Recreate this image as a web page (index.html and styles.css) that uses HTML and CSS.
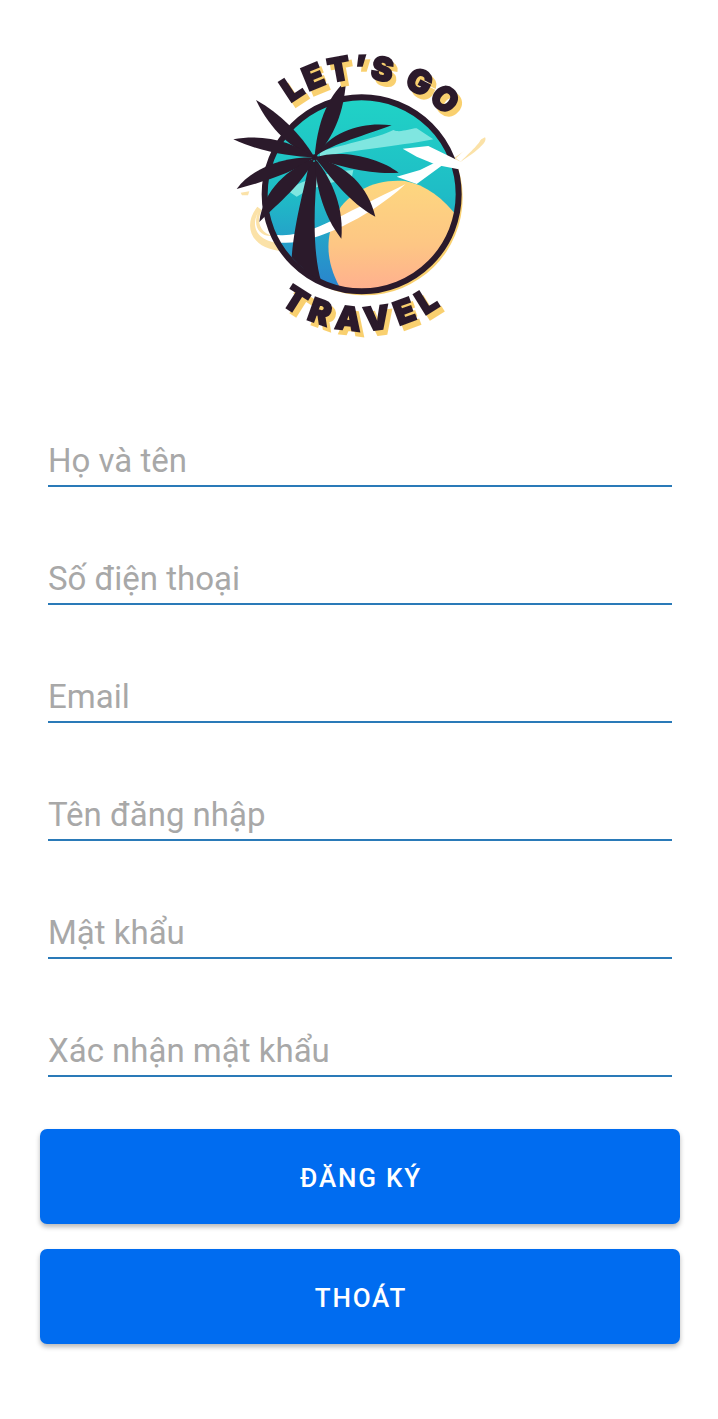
FILE: index.html
```html
<!DOCTYPE html>
<html lang="vi">
<head>
<meta charset="utf-8">
<title>Đăng ký</title>
<link rel="stylesheet" href="styles.css">
</head>
<body>
<main class="page">
  <div class="logo-wrap">
    <svg class="logo" viewBox="0 0 840 900" role="img" aria-label="Let's Go Travel">
      <defs>
        <linearGradient id="sea" x1="0" y1="0" x2="0" y2="1">
          <stop offset="0" stop-color="#20d3c6"/>
          <stop offset="0.5" stop-color="#1fbcc6"/>
          <stop offset="1" stop-color="#2b80cd"/>
        </linearGradient>
        <linearGradient id="sand" x1="0" y1="0" x2="0" y2="1">
          <stop offset="0" stop-color="#fdd77f"/>
          <stop offset="0.55" stop-color="#fdc684"/>
          <stop offset="1" stop-color="#ffac90"/>
        </linearGradient>
        <clipPath id="disc"><circle cx="425" cy="433" r="290"/></clipPath>
        <path id="arcTop" d="M 212 160 A 345 345 0 0 1 690 212"/>
        <path id="arcBottom" d="M 180 760 A 406 406 0 0 0 680 752"/>
      </defs>

      <circle class="disc-shadow" cx="435" cy="443" r="293"/>
      <path class="swoosh-shadow" d="M 112 470 C 65 530 95 598 190 604 L 170 560 C 125 555 105 520 125 480 Z"/>
      <path class="swoosh-shadow" d="M 700 325 C 740 300 770 275 795 262 C 803 275 780 298 715 340 Z"/>
      <path class="swoosh-shadow" d="M 62 428 L 88 424 L 84 436 L 66 436 Z"/>

      <g clip-path="url(#disc)">
        <rect class="sea" x="130" y="140" width="590" height="590"/>
        <path class="cloud" d="M 300 305 C 380 280 470 265 520 240 C 540 250 570 235 590 235 L 640 268 C 560 285 440 295 300 320 Z"/>
        <path class="cloud" d="M 200 420 C 260 385 330 365 400 360 L 395 385 C 340 395 280 410 230 440 Z"/>
        <path class="sand" d="M 370 730 C 320 650 310 570 350 490 C 385 425 470 385 555 393 C 620 405 670 445 720 510 L 730 740 Z"/>
      </g>

      <path class="trail" d="M 115 485 C 95 530 120 570 175 555 C 235 560 300 530 370 495 C 440 460 500 430 556 403 C 500 455 430 500 365 530 C 300 560 240 580 190 578 C 125 582 85 540 115 485 Z"/>

      <circle class="ring" cx="425" cy="433" r="291"/>

      <path class="trail" d="M 548 296 L 625 288 L 722 335 L 716 358 L 650 345 L 590 320 Z"/>
      <path class="trail" d="M 530 380 L 600 360 L 650 335 L 668 345 L 590 402 Z"/>
      <path class="trail" d="M 708 325 C 740 295 760 275 782 262 C 788 272 760 298 722 335 Z"/>

      <g class="palm">
        <circle cx="284" cy="322" r="9"/>
        <path d="M 268 335 C 258 400 225 500 215 622 C 240 650 270 675 304 695 C 280 620 278 480 295 335 Z"/>
        <path d="M 284 322 C 290 230 320 140 378 93 C 372 180 345 260 284 322 Z"/>
        <path d="M 284 322 C 240 250 180 190 108 150 C 150 240 220 300 284 322 Z"/>
        <path d="M 284 322 C 220 275 130 250 40 268 C 120 305 210 320 284 322 Z"/>
        <path d="M 284 322 C 190 320 95 355 50 417 C 130 395 220 370 284 322 Z"/>
        <path d="M 284 325 C 205 355 130 420 118 516 C 175 460 250 400 284 325 Z"/>
        <path d="M 284 325 C 285 400 310 500 364 566 C 372 480 340 390 284 325 Z"/>
        <path d="M 284 322 C 330 380 390 460 466 500 C 445 410 380 345 284 322 Z"/>
        <path d="M 284 322 C 350 350 460 375 536 368 C 480 325 370 295 284 322 Z"/>
        <path d="M 284 320 C 340 280 440 255 515 226 C 440 215 340 235 284 320 Z"/>
      </g>

      <g class="logo-text">
        <text><textPath href="#arcTop" textLength="515" lengthAdjust="spacing">LET’S GO</textPath></text>
        <text><textPath href="#arcBottom" textLength="515" lengthAdjust="spacing">TRAVEL</textPath></text>
      </g>
    </svg>
  </div>

  <form class="form">
    <div class="fields">
      <input class="field" type="text" placeholder="Họ và tên">
      <input class="field" type="text" placeholder="Số điện thoại">
      <input class="field" type="text" placeholder="Email">
      <input class="field" type="text" placeholder="Tên đăng nhập">
      <input class="field" type="text" placeholder="Mật khẩu">
      <input class="field" type="text" placeholder="Xác nhận mật khẩu">
    </div>
    <div class="actions">
      <button class="btn" type="button">ĐĂNG KÝ</button>
      <button class="btn" type="button">THOÁT</button>
    </div>
  </form>
</main>
</body>
</html>
```
FILE: styles.css
```css
* {
  box-sizing: border-box;
}

html,
body {
  margin: 0;
  background: #fff;
}

.page {
  width: 718px;
  height: 1419px;
  overflow: hidden;
  font-family: Roboto, "Noto Sans", sans-serif;
}

.logo-wrap {
  display: flex;
  justify-content: center;
  padding: 50px 0 0 2px;
  height: 369px;
}

.logo {
  display: block;
  width: 280px;
  height: 300px;
}

.logo-text {
  font-family: Inter, Lato, sans-serif;
  font-weight: 900;
  font-size: 98px;
  fill: #2b1a2b;
  stroke: #2b1a2b;
  stroke-width: 5px;
  filter: drop-shadow(12px 15px 0 #f9d06f);
}

.disc-shadow {
  fill: #f9d06f;
}

.swoosh-shadow {
  fill: #fbe2a8;
}

.sea {
  fill: url(#sea);
}

.cloud {
  fill: #7fe6e0;
}

.sand {
  fill: url(#sand);
}

.trail {
  fill: #fff;
}

.ring {
  fill: none;
  stroke: #2b1a2b;
  stroke-width: 18px;
}

.palm {
  fill: #2b1a2b;
}

.form {
  display: flex;
  flex-direction: column;
  padding: 0 38px 0 40px;
}

.fields {
  display: flex;
  flex-direction: column;
  gap: 68px;
  padding: 0 8px;
  margin-top: 68px;
}

.field {
  display: block;
  width: 100%;
  height: 50px;
  padding: 0 0 1px 0;
  border: 0;
  border-bottom: 2px solid #2a7ab8;
  outline: 0;
  background: transparent;
  font-family: inherit;
  font-size: 33px;
  color: #333;
}

.field::placeholder {
  color: #a8a8a8;
  opacity: 1;
}

.actions {
  display: flex;
  flex-direction: column;
  gap: 25px;
  margin-top: 52px;
}

.btn {
  display: block;
  width: 100%;
  height: 95px;
  padding: 2px 0 0 2px;
  border: 0;
  border-radius: 7px;
  background: #006cf0;
  box-shadow: 0 3px 5px rgba(0, 0, 0, 0.28);
  font-family: inherit;
  font-size: 26px;
  font-weight: 500;
  letter-spacing: 1.8px;
  color: #fff;
}
```
